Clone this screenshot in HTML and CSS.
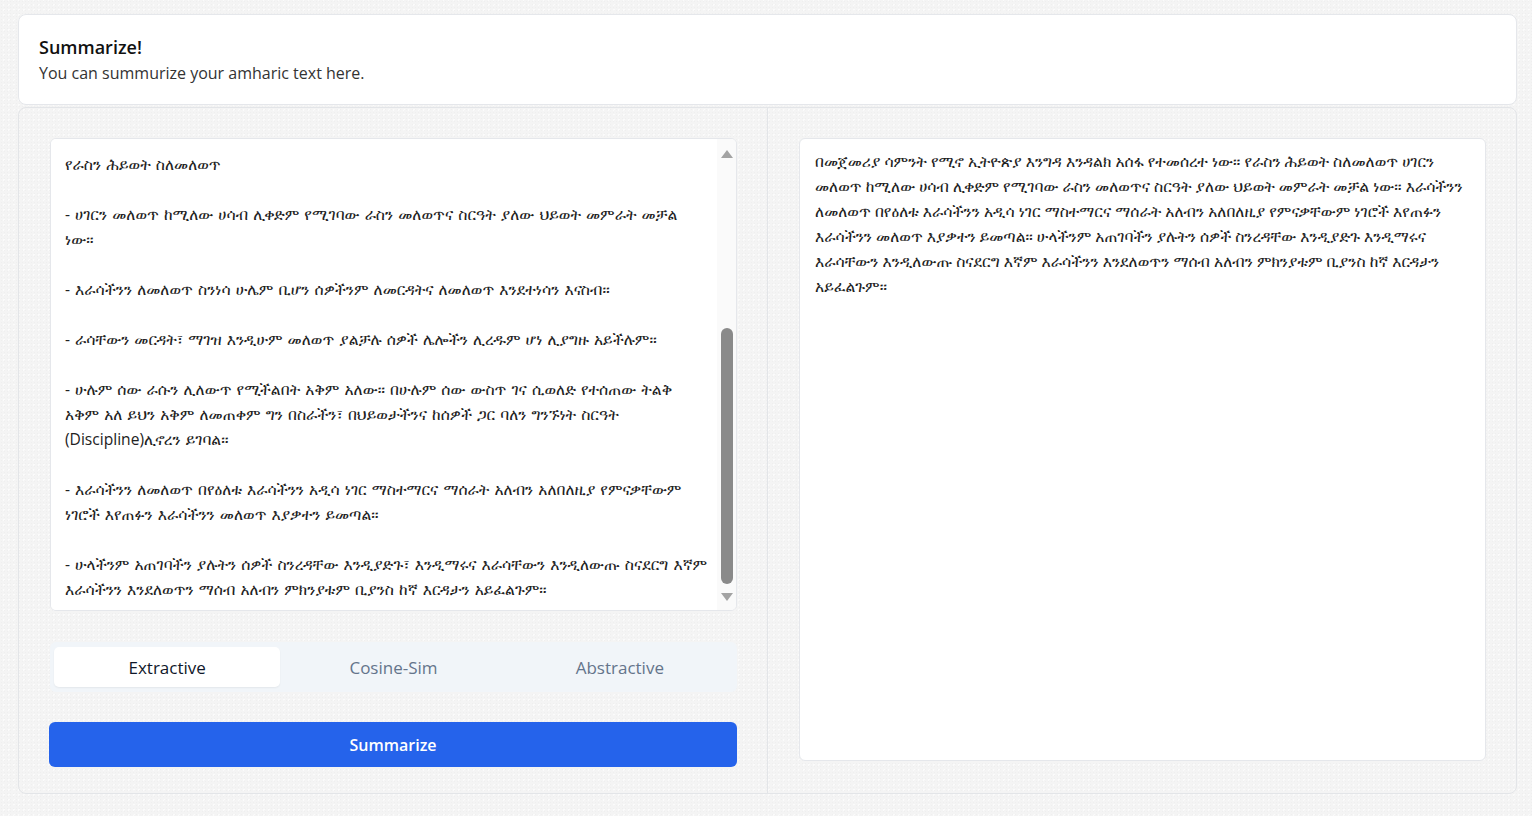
FILE: index.html
```html
<!DOCTYPE html>
<html lang="am">
<head>
<meta charset="utf-8">
<title>Summarize!</title>
<link rel="stylesheet" href="styles.css">
</head>
<body>
<div class="page">
  <header class="intro card">
    <h1 class="intro-title">Summarize!</h1>
    <p class="intro-sub">You can summurize your amharic text here.</p>
  </header>

  <main class="workspace">
    <section class="col col-input">
      <div class="input-box">
        <textarea class="input-text" spellcheck="false">የራስን ሕይወት ስለመለወጥ

- ሀገርን መለወጥ ከሚለው ሀሳብ ሊቀድም የሚገባው ራስን መለወጥና ስርዓት ያለው ህይወት መምራት መቻል ነው።

- እራሳችንን ለመለወጥ ስንነሳ ሁሌም ቢሆን ሰዎችንም ለመርዳትና ለመለወጥ እንደተነሳን እናስብ።

- ራሳቸውን መርዳት፣ ማገዝ እንዲሁም መለወጥ ያልቻሉ ሰዎች ሌሎችን ሊረዱም ሆነ ሊያግዙ አይችሉም።

- ሁሉም ሰው ራሱን ሊለውጥ የሚችልበት አቅም አለው። በሁሉም ሰው ውስጥ ገና ሲወለድ የተሰጠው ትልቅ አቅም አለ ይህን አቅም ለመጠቀም ግን በስራችን፣ በህይወታችንና ከሰዎች ጋር ባለን ግንኙነት ስርዓት (Discipline)ሊኖረን ይገባል።

- እራሳችንን ለመለወጥ በየዕለቱ እራሳችንን አዲሳ ነገር ማስተማርና ማሰራት አለብን አለበለዚያ የምናቃቸውም ነገሮች እየጠፉን እራሳችንን መለወጥ እያቃተን ይመጣል።

- ሁላችንም አጠገባችን ያሉትን ሰዎች ስንረዳቸው እንዲያድጉ፣ እንዲማሩና እራሳቸውን እንዲለውጡ ስናደርግ እኛም እራሳችንን እንደለወጥን ማሰብ አለብን ምክንያቱም ቢያንስ ከኛ እርዳታን አይፈልጉም።</textarea>
        <div class="scrollbar" aria-hidden="true">
          <span class="sb-arrow sb-up"></span>
          <span class="sb-track"><span class="sb-thumb"></span></span>
          <span class="sb-arrow sb-down"></span>
        </div>
      </div>

      <div class="tabs" role="tablist">
        <button class="tab tab-active" role="tab">Extractive</button>
        <button class="tab" role="tab">Cosine-Sim</button>
        <button class="tab" role="tab">Abstractive</button>
      </div>

      <button class="submit">Summarize</button>
    </section>

    <section class="col col-output">
      <div class="output-box">በመጀመሪያ ሳምንት የሚኖ ኢትዮጵያ እንግዳ እንዳልክ አሰፋ የተመሰረተ ነው። የራስን ሕይወት ስለመለወጥ ሀገርን መለወጥ ከሚለው ሀሳብ ሊቀድም የሚገባው ራስን መለወጥና ስርዓት ያለው ህይወት መምራት መቻል ነው። እራሳችንን ለመለወጥ በየዕለቱ እራሳችንን አዲሳ ነገር ማስተማርና ማሰራት አለብን አለበለዚያ የምናቃቸውም ነገሮች እየጠፉን እራሳችንን መለወጥ እያቃተን ይመጣል። ሁላችንም አጠገባችን ያሉትን ሰዎች ስንረዳቸው እንዲያድጉ እንዲማሩና እራሳቸውን እንዲለውጡ ስናደርግ እኛም እራሳችንን እንደለወጥን ማሰብ አለብን ምክንያቱም ቢያንስ ከኛ እርዳታን አይፈልጉም።</div>
    </section>
  </main>
</div>
</body>
</html>
```

FILE: styles.css
```css
* { box-sizing: border-box; }

html, body {
  margin: 0;
  padding: 0;
}

body {
  background-color: #f4f4f4;
  background-image:
    radial-gradient(rgba(0,0,0,0.02) 1px, transparent 1px),
    radial-gradient(rgba(255,255,255,0.6) 1px, transparent 1px);
  background-size: 3px 3px, 5px 5px;
  background-position: 0 0, 1px 2px;
  font-family: "Segoe UI", "Open Sans", "Noto Sans", sans-serif;
  color: #111;
}

.page {
  padding: 14px 15px 0 18px;
  display: flex;
  flex-direction: column;
  gap: 2px;
}

.card {
  background: #fff;
  border: 1px solid #e5e7eb;
  border-radius: 8px;
}

.intro {
  padding: 18px 20px 19px;
}

.intro-title {
  margin: 0;
  font-size: 18px;
  line-height: 28px;
  font-weight: 600;
  color: #111;
}

.intro-sub {
  margin: 0;
  font-size: 16px;
  line-height: 24px;
  color: #333;
}

.workspace {
  display: grid;
  grid-template-columns: 748px 1fr;
  border: 1px solid #e3e5e8;
  border-radius: 8px;
  height: 687px;
}

.col {
  display: flex;
  flex-direction: column;
}

.col-input {
  padding: 30px 30px 26px 31px;
}

.col-output {
  border-left: 1px solid #e3e5e8;
  padding: 30px 30px 32px 31px;
}

.input-box {
  display: flex;
  height: 473px;
  background: #fff;
  border: 1px solid #e5e7eb;
  border-radius: 6px;
  overflow: hidden;
}

.input-text {
  flex: 1;
  border: none;
  outline: none;
  resize: none;
  overflow: hidden;
  padding: 13px 8px 0 14px;
  font-family: "Open Sans", "FreeSerif", sans-serif;
  font-size: 15.6px;
  line-height: 25px;
  word-spacing: 1px;
  color: #222;
  background: #fff;
}

.scrollbar {
  width: 19px;
  display: flex;
  flex-direction: column;
  align-items: center;
  background: #fafafa;
  padding: 0 2px;
}

.sb-arrow {
  width: 15px;
  height: 17px;
  display: flex;
  align-items: center;
  justify-content: center;
}

.sb-up::before,
.sb-down::before {
  content: "";
  width: 0;
  height: 0;
  border-left: 6px solid transparent;
  border-right: 6px solid transparent;
}

.sb-up::before { border-bottom: 8px solid #a3a3a3; margin-top: 12px; }
.sb-down::before { border-top: 8px solid #a3a3a3; margin-bottom: 10px; }

.sb-track {
  flex: 1;
  width: 100%;
  display: flex;
  flex-direction: column;
  justify-content: flex-end;
  align-items: center;
  padding-bottom: 9px;
}

.sb-thumb {
  width: 12px;
  height: 256px;
  background: #8a8a8a;
  border-radius: 6px;
}

.tabs {
  margin-top: 31px;
  height: 50px;
  display: grid;
  grid-template-columns: 1fr 1fr 1fr;
  padding: 5px 4px;
  background: #f1f5f9;
  border-radius: 6px;
}

.tab {
  border: none;
  background: transparent;
  border-radius: 5px;
  font-family: "Segoe UI", "Open Sans", "Noto Sans", sans-serif;
  font-size: 17px;
  font-weight: 500;
  color: #64748b;
  cursor: pointer;
  padding: 0;
  line-height: 1;
}

.tab-active {
  background: #fff;
  color: #0f172a;
  box-shadow: 0 1px 2px rgba(0,0,0,0.06);
}

.submit {
  margin-top: 30px;
  height: 45px;
  border: none;
  border-radius: 6px;
  background: #2563eb;
  color: #fff;
  font-family: "Segoe UI", "Open Sans", "Noto Sans", sans-serif;
  font-size: 16px;
  font-weight: 600;
  cursor: pointer;
  margin-left: -1px;
}

.output-box {
  flex: 1;
  background: #fff;
  border: 1px solid #e5e7eb;
  border-radius: 6px;
  padding: 10px 15px;
  font-family: "Open Sans", "FreeSerif", sans-serif;
  font-size: 15.6px;
  line-height: 25px;
  color: #222;
}
```
